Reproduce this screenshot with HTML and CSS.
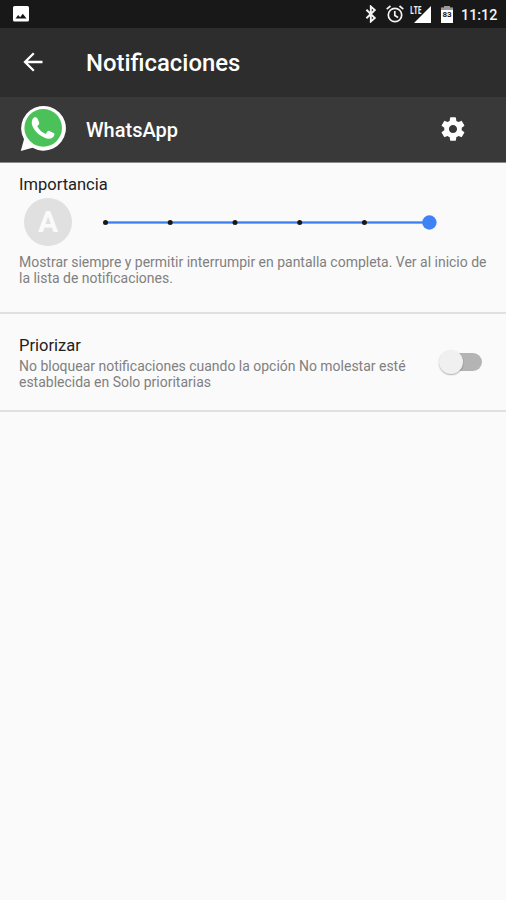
FILE: index.html
```html
<!DOCTYPE html>
<html lang="es">
<head>
<meta charset="utf-8">
<title>Notificaciones</title>
<link rel="stylesheet" href="styles.css">
</head>
<body>
<div class="status">
  <svg class="picture" width="16" height="16" viewBox="0 0 16 16"><rect width="16" height="15.5" rx="1.5" fill="#fff"/><path d="M2.5 12.5 5.2 9l1.9 2.3L9.8 7.7l3.7 4.8z" fill="#181818"/></svg>
  <svg class="bluetooth" width="12" height="18" viewBox="0 0 12 18"><path d="M1.4 4.8 9.8 13 5.8 16.5V1.5l4 3.5-8.4 8.2" fill="none" stroke="#f4f4f4" stroke-width="1.9"/></svg>
  <svg class="alarm" width="18" height="18" viewBox="0 0 18 18"><g fill="none" stroke="#f4f4f4" stroke-width="1.7"><circle cx="9" cy="10" r="6.7"/><path d="M.7 4.2 4.5 1M13.5 1l3.8 3.2M8.8 6v4.4l3.3 2"/></g></svg>
  <div class="signal"><svg width="17" height="17" viewBox="0 0 17 17"><path d="M0 17 17 0v17z" fill="#fff"/></svg><span class="lte">LTE</span></div>
  <div class="battery"><svg width="12" height="17" viewBox="0 0 12 17"><path d="M3.5 0h5v1.8H12V17H0V1.8h3.5z" fill="#fff"/><path d="M3.5 0h5v1.8H12V4H0V1.8h3.5z" fill="#999"/></svg><span class="level">83</span></div>
  <span class="clock">11:12</span>
</div>
<header class="toolbar">
  <svg class="back" width="20" height="20" viewBox="0 0 20 20"><path d="M19.5 10H2M10.8 1.2 2 10l8.8 8.8" fill="none" stroke="#fff" stroke-width="2.3"/></svg>
  <h1 class="title">Notificaciones</h1>
</header>
<section class="app">
  <svg class="logo" width="46" height="47" viewBox="0 0 46 47"><path d="M.8 46 4 34.3A22.4 22.4 0 1 1 12.5 42.8z" fill="#fff"/><circle cx="23.2" cy="22.9" r="18.8" fill="#4bc259"/><path d="M4.8 41.8 7 33.2 13.5 39.6z" fill="#fff"/><path d="M12.9 13.6c1-1.5 3.4-2 4.4-.3l1.9 4.2c.3.7.1 1.3-.4 1.9l-1.5 1.9c1.9 3.7 4.6 6.2 8.3 7.6l2-2.6c.5-.6 1-.7 1.7-.4l4.2 2c.9.5 1.1.9.9 1.8-.6 3-3.8 4.5-6.5 4-7.3-1.5-12.8-6.4-15.5-12.6-1-2.9-.9-5.4.5-7.5z" fill="#fff"/></svg>
  <h2 class="name">WhatsApp</h2>
  <svg class="gear" width="28" height="28" viewBox="0 0 24 24"><path fill="#fff" d="M19.43 12.98c.04-.32.07-.64.07-.98s-.03-.66-.07-.98l2.11-1.65c.19-.15.24-.42.12-.64l-2-3.46c-.12-.22-.39-.3-.61-.22l-2.49 1c-.52-.4-1.08-.73-1.69-.98l-.38-2.65C14.46 2.18 14.25 2 14 2h-4c-.25 0-.46.18-.49.42l-.38 2.65c-.61.25-1.17.59-1.69.98l-2.49-1c-.23-.09-.49 0-.61.22l-2 3.46c-.13.22-.07.49.12.64l2.11 1.65c-.04.32-.07.65-.07.98s.03.66.07.98l-2.11 1.65c-.19.15-.24.42-.12.64l2 3.46c.12.22.39.3.61.22l2.49-1c.52.4 1.08.73 1.69.98l.38 2.65c.03.24.24.42.49.42h4c.25 0 .46-.18.49-.42l.38-2.65c.61-.25 1.17-.59 1.69-.98l2.49 1c.23.09.49 0 .61-.22l2-3.46c.12-.22.07-.49-.12-.64l-2.11-1.65zM12 15.5c-1.93 0-3.5-1.57-3.5-3.5s1.57-3.5 3.5-3.5 3.5 1.57 3.5 3.5-1.57 3.5-3.5 3.5z"/></svg>
</section>
<main>
  <section class="importance">
    <h3 class="label">Importancia</h3>
    <div class="slider">
      <span class="auto">A</span>
      <svg class="track" width="336" height="16" viewBox="0 0 336 16"><path d="M4 7.5h324" stroke="#7aa9f8" stroke-width="3"/><path d="M4 7.5h324" stroke="#3c7ff0" stroke-width="1.2"/><g fill="#181818"><circle cx="4.5" cy="7.5" r="2.5"/><circle cx="69.2" cy="7.5" r="2.5"/><circle cx="134" cy="7.5" r="2.5"/><circle cx="198.7" cy="7.5" r="2.5"/><circle cx="263.4" cy="7.5" r="2.5"/></g><circle cx="328.4" cy="7.5" r="7.2" fill="#3f82f5"/></svg>
    </div>
    <p class="text">Mostrar siempre y permitir interrumpir en pantalla completa. Ver al inicio de<br>la lista de notificaciones.</p>
  </section>
  <section class="priority">
    <div>
      <h3 class="label">Priorizar</h3>
      <p class="text">No bloquear notificaciones cuando la opción No molestar esté<br>establecida en Solo prioritarias</p>
    </div>
    <span class="switch"><span class="thumb"></span></span>
  </section>
</main>
</body>
</html>
```
FILE: styles.css
```css
* { box-sizing: border-box; }
body {
  margin: 0;
  min-height: 900px;
  background: #fafafa;
  font-family: Roboto, "Liberation Sans", sans-serif;
}
h1, h2, h3, p { margin: 0; font-weight: 400; white-space: nowrap; }
svg { display: block; flex: none; }

.status {
  height: 28px;
  display: flex;
  align-items: flex-start;
  background: #181818;
  color: #f4f4f4;
}
.picture { margin: 6px 0 0 13px; }
.bluetooth { margin: 5px 0 0 336px; }
.alarm { margin: 5px 0 0 9px; }
.signal { position: relative; margin: 6px 0 0 10px; }
.lte {
  position: absolute;
  left: -4px;
  top: -1px;
  font: 700 10px/10px "Open Sans", sans-serif;
  transform: scaleX(.68);
  transform-origin: 0 0;
}
.battery { position: relative; margin: 6px 0 0 10px; }
.level {
  position: absolute;
  inset: 5px 0 auto;
  text-align: center;
  color: #181818;
  font-size: 8px;
  line-height: 8px;
  font-weight: 700;
}
.clock {
  margin: 5px 0 0 8px;
  font-size: 14.3px;
  line-height: 20px;
  font-weight: 500;
}

.toolbar {
  height: 69px;
  display: flex;
  align-items: center;
  background: #2d2d2d;
  color: #fff;
}
.back { margin: 0 0 1px 23px; }
.title { margin-left: 43px; font-size: 23.9px; font-weight: 500; }

.app {
  height: 66px;
  display: flex;
  align-items: center;
  background: #393939;
  border-bottom: 1px solid #8a8a8a;
  color: #fff;
}
.logo { margin: 0 0 2px 20px; }
.name { margin-left: 20px; font-size: 20px; font-weight: 500; }
.gear { margin: 0 39px 1px auto; }

.importance {
  height: 151px;
  padding: 10px 19px 0;
  border-bottom: 2px solid #e0e0e0;
}
.label {
  height: 22px;
  padding-top: 1px;
  font-size: 16.5px;
  line-height: 22px;
  color: #212121;
}
.slider { display: flex; align-items: center; height: 55px; }
.auto {
  width: 48px;
  height: 48px;
  margin: 0 0 1px 5px;
  border-radius: 50%;
  background: #e0e0e0;
  color: #fafafa;
  font-size: 30px;
  line-height: 47px;
  font-weight: 700;
  text-align: center;
}
.track { margin-left: 29px; }
.text { padding-top: 4px; font-size: 13.97px; line-height: 16px; color: #808080; }

.priority {
  display: flex;
  align-items: flex-start;
  justify-content: space-between;
  height: 98px;
  padding: 20px 24px 0 19px;
  border-bottom: 2px solid #e0e0e0;
}
.priority .text { padding-top: 2px; }
.switch {
  width: 40px;
  height: 18px;
  margin-top: 19px;
  border-radius: 9px;
  background: #b4b4b4;
}
.thumb {
  display: block;
  width: 24px;
  height: 24px;
  margin: -3px 0 0 -3px;
  border-radius: 50%;
  background: #f0f0f0;
  box-shadow: 0 1px 1.5px rgba(0, 0, 0, .3);
}
```
